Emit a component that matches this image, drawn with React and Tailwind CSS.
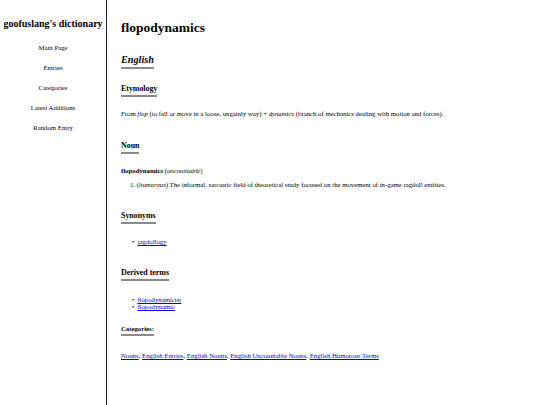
const navLinks = ['Main Page', 'Entries', 'Categories', 'Latest Additions', 'Random Entry'];

const categories = ['Nouns', 'English Entries', 'English Nouns', 'English Uncountable Nouns', 'English Humorous Terms'];

const Heading = ({ children, className = '' }) => (
  <div>
    <h3 className={`inline-block border-b-2 border-[#8a8a8a] pb-[1px] font-bold ${className}`}>{children}</h3>
  </div>
);

const WikiLink = ({ children }) => (
  <a href="#" className="text-[#0000ee] underline">{children}</a>
);

const Bullet = ({ children }) => (
  <li className="flex items-baseline gap-[3px]">
    <span>•</span>
    {children}
  </li>
);

export default function App() {
  return (
    <div className="flex min-h-[405px] bg-white text-black font-['Liberation_Serif',serif]">
      {/* Sidebar */}
      <aside className="w-[107px] shrink-0 border-r border-[#222] text-center">
        <h2 className="mt-[18px] text-[10px] leading-[12px] font-bold whitespace-nowrap">goofuslang's dictionary</h2>
        <nav className="mt-[14px] flex flex-col gap-[12px] text-[6.75px] leading-[8px]">
          {navLinks.map((link) => (
            <a key={link} href="#">{link}</a>
          ))}
        </nav>
      </aside>

      {/* Entry */}
      <main className="flex-1 pl-[14px] pt-[20px] text-[6.75px] leading-[8px]">
        <h1 className="text-[13.5px] leading-[16px] font-bold">flopodynamics</h1>

        <Heading className="mt-[18px] text-[10.2px] leading-[12px] italic">English</Heading>

        <Heading className="mt-[15px] text-[7.9px] leading-[10px]">Etymology</Heading>
        <p className="mt-[13px]">
          From <i>flop</i> (to fall or move in a loose, ungainly way) + <i>dynamics</i> (branch of mechanics dealing with motion and forces).
        </p>

        <div className="mt-[23px]">
          <Heading className="text-[7.9px] leading-[10px]">Noun</Heading>
        </div>
        <p className="mt-[13px]">
          <b>flopodynamics</b> (<i>uncountable</i>)
        </p>
        <ol className="mt-[6px] list-decimal list-inside pl-[9px]">
          <li>(<i>humorous</i>) The informal, sarcastic field of theoretical study focused on the movement of in-game ragdoll entities.</li>
        </ol>

        <div className="mt-[22px]">
          <Heading className="text-[7.9px] leading-[10px]">Synonyms</Heading>
        </div>
        <ul className="mt-[14px] pl-[11px]">
          <Bullet><WikiLink>ragdollogy</WikiLink></Bullet>
        </ul>

        <div className="mt-[22px]">
          <Heading className="text-[7.9px] leading-[10px]">Derived terms</Heading>
        </div>
        <ul className="mt-[15px] pl-[11px] leading-[7px]">
          <Bullet><WikiLink>flopodynamicist</WikiLink></Bullet>
          <Bullet><WikiLink>flopodynamic</WikiLink></Bullet>
        </ul>

        <div className="mt-[15px]">
          <Heading className="text-[6.75px] leading-[8px]">Categories:</Heading>
        </div>
        <p className="mt-[16px]">
          {categories.map((cat, i) => (
            <span key={cat}>
              <WikiLink>{cat}</WikiLink>
              {i < categories.length - 1 && ', '}
            </span>
          ))}
        </p>
      </main>
    </div>
  );
}
